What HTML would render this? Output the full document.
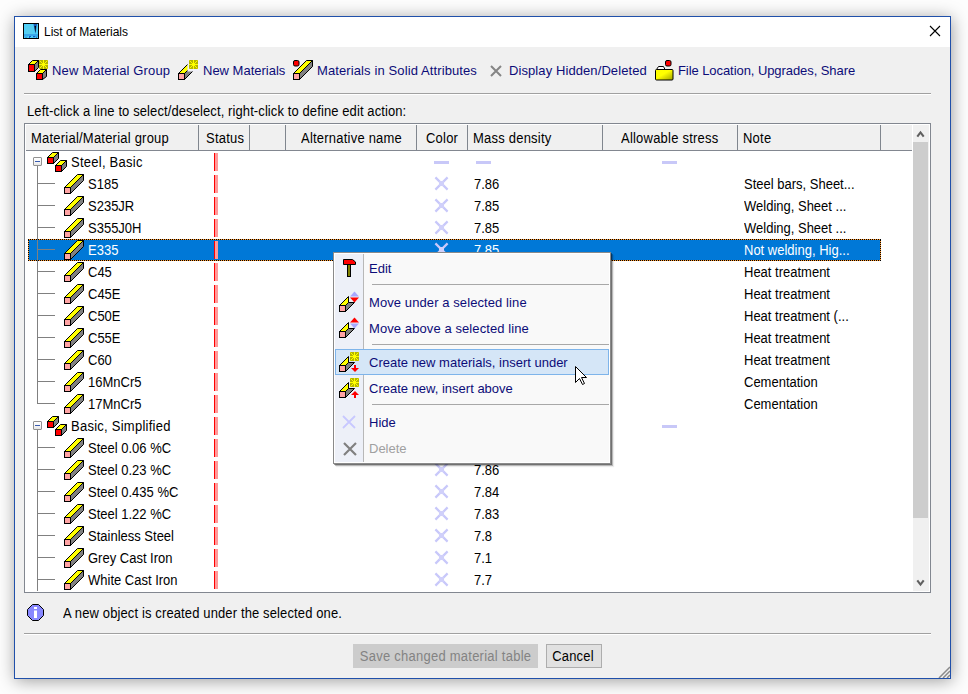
<!DOCTYPE html>
<html><head><meta charset="utf-8">
<style>
*{margin:0;padding:0;box-sizing:border-box}
html,body{width:968px;height:694px;overflow:hidden;background:#fdfdfd;font-family:"Liberation Sans",sans-serif;font-size:13px}
.abs{position:absolute}
#win{position:absolute;left:14px;top:16px;width:937px;height:663px;border:1px solid #2050aa;background:#f0f0f0;box-shadow:1px 2px 16px rgba(0,0,0,0.38)}
#title{position:absolute;left:0;top:0;width:935px;height:30px;background:#fff}
.ic{position:absolute;display:block}
.tb{position:absolute;top:60px;height:22px;line-height:22px;color:#0c0c78;white-space:nowrap}
#table{position:absolute;left:24px;top:123px;width:907px;height:470px;border:1px solid #828790;background:#fff;overflow:hidden}
.t{position:absolute;height:22px;line-height:22px;white-space:nowrap;color:#000;transform:scaleY(1.11);transform-origin:0 7px}
.sel{position:absolute;left:28px;width:853px;height:22px;background:#0078d7;border:1px solid #ff9a30}
.sel:after{content:'';position:absolute;left:-1px;top:-1px;right:-1px;bottom:-1px;border:1px dotted #000}
.exp{position:absolute;left:33px;width:9px;height:9px;border:1px solid #919191;border-radius:1px;background:linear-gradient(#fff,#f4f4f4 60%,#e6e6e6)}
.exp i{position:absolute;left:1px;top:3px;width:5px;height:1px;background:#3a5cb0}
.hb{position:absolute;left:37px;width:18px;height:1px;background:#808080}
.vl{position:absolute;left:37px;width:1px;background:#808080}
.st{position:absolute;left:214px;width:4px;height:18px;background:#ff9a9a;border-left:1px solid #f00}
.dash{position:absolute;width:15px;height:3px;background:#c8c8f8}
.xm{position:absolute;width:15px;height:15px}
.xm svg{display:block}
.hd{position:absolute;top:124px;height:27px;background:#f0f0f0;border-bottom:1px solid #828790}
.hdiv{position:absolute;top:125px;width:1px;height:25px;background:#80868e}
.ht{position:absolute;top:125px;height:26px;line-height:26px;white-space:nowrap;color:#000;transform:scaleY(1.11);transform-origin:0 9px;letter-spacing:0.22px}
#menu{position:absolute;left:333px;top:252px;width:278px;height:212px;background:#f9f9f9;border:1px solid #8a8a8a;box-shadow:inset 1px 1px 0 #fff,inset -1px -1px 0 #fff,1px 1px 0 rgba(0,0,0,0.38),2px 2px 0 rgba(0,0,0,0.22),3px 3px 1px rgba(0,0,0,0.08)}
.mi{position:absolute;left:369px;margin-top:1px;height:26px;line-height:26px;color:#0c0c78;white-space:nowrap}
.msep{position:absolute;left:372px;width:237px;height:1px;background:#a8a8a8}
.btn{position:absolute;top:644px;height:24px;line-height:22px;text-align:center;white-space:nowrap}
.btn span{display:inline-block;transform:scaleY(1.11);transform-origin:0 7px}
</style></head><body>
<div id="win">
 <div id="title"></div>
</div>
<!-- title -->
<svg class="ic" style="left:23px;top:23px" width="16" height="16" viewBox="0 0 16 16"><rect x="0.5" y="0.5" width="15" height="15" fill="#50d0f8" stroke="#000"/><rect x="3" y="3" width="7" height="9" fill="#58cef0"/><path d="M10.5,1 L14,1 L12.5,11 Z" fill="#1a5ab8"/><path d="M11.5,3 L13,3 L12.3,10 Z" fill="#000"/><rect x="1" y="11.5" width="14" height="1" fill="#2080e0"/><path d="M2,13.5 L3,14.5 L4,13.5 M6,13.5 h2 M6,14.5 h1 M10,13.5 h2 L11,14.5 M13,13.5 L13.5,14.5 L14,13.5" stroke="#1060c8" stroke-width="1" fill="none"/></svg>
<div class="t" style="left:44px;top:21px;height:22px;line-height:22px;font-size:12px;transform:none">List of Materials</div>
<svg class="ic" style="left:929px;top:25px" width="12" height="12" viewBox="0 0 12 12"><path d="M1,1 L11,11 M11,1 L1,11" stroke="#000" stroke-width="1.1"/></svg>

<!-- toolbar -->
<svg class="ic" style="left:28px;top:60px" width="22" height="21" viewBox="0 0 22 21"><polygon points="0.5,4.5 4.5,0.5 10.5,0.5 6.5,4.5" fill="#ff0" stroke="#000"/><polygon points="6.5,4.5 10.5,0.5 10.5,7.5 6.5,11.5" fill="#808080" stroke="#000"/><rect x="0.5" y="4.5" width="6" height="7" fill="#f00" stroke="#000"/><polygon points="8.5,13.5 12.5,9.5 18.5,9.5 14.5,13.5" fill="#ff0" stroke="#000"/><polygon points="14.5,13.5 18.5,9.5 18.5,16.5 14.5,19.5" fill="#808080" stroke="#000"/><rect x="8.5" y="13.5" width="6" height="6" fill="#f00" stroke="#000"/><rect x="11" y="0" width="9" height="9" fill="#b4b400"/><path d="M11.5,0.5 L19.5,8.5 M19.5,0.5 L11.5,8.5" stroke="#ffff00" stroke-width="1"/><path d="M15.5,0 v9 M11,4.5 h9" stroke="#ffff00" stroke-width="1"/><rect x="14" y="3" width="3" height="3" fill="#ffff00"/></svg>
<svg class="ic" style="left:178px;top:60px" width="22" height="21" viewBox="0 0 22 21"><polygon points="0.5,13.5 13.5,0.5 19.5,0.5 6.5,13.5" fill="#ffff00" stroke="#000"/><polygon points="6.5,13.5 19.5,0.5 19.5,6.5 6.5,19.5" fill="#808080" stroke="#000"/><rect x="0.5" y="13.5" width="6" height="6" fill="#ffa4a4" stroke="#000"/><rect x="9.5" y="-0.5" width="12" height="12" fill="#f0f0f8"/><rect x="11" y="0" width="9" height="9" fill="#b4b400"/><path d="M11.5,0.5 L19.5,8.5 M19.5,0.5 L11.5,8.5" stroke="#ffff00" stroke-width="1"/><path d="M15.5,0 v9 M11,4.5 h9" stroke="#ffff00" stroke-width="1"/><rect x="14" y="3" width="3" height="3" fill="#ffff00"/></svg>
<svg class="ic" style="left:293px;top:60px" width="21" height="21" viewBox="0 0 21 21"><polygon points="0.5,13.5 13.5,0.5 19.5,0.5 6.5,13.5" fill="#ffff00" stroke="#000"/><polygon points="6.5,13.5 19.5,0.5 19.5,6.5 6.5,19.5" fill="#808080" stroke="#000"/><rect x="0.5" y="13.5" width="6" height="6" fill="#ffa4a4" stroke="#000"/><rect x="0.5" y="0.5" width="5.5" height="5.5" rx="1.5" fill="#f00" stroke="#000"/></svg>
<svg class="ic" style="left:490px;top:65px" width="12" height="12" viewBox="0 0 12 12"><path d="M1,1 L11,11 M11,1 L1,11" stroke="#858585" stroke-width="2"/></svg>
<svg class="ic" style="left:655px;top:60px" width="20" height="21" viewBox="0 0 20 21"><path d="M1.5,9.5 L3.5,6.5 L8.5,6.5 L10,9.5" fill="#fff" stroke="#000"/><defs><linearGradient id="fg" x1="0" y1="0" x2="1" y2="1"><stop offset="0.45" stop-color="#ffff00"/><stop offset="1" stop-color="#a0a000"/></linearGradient></defs><rect x="0.5" y="9.5" width="17.5" height="10.5" rx="1" fill="url(#fg)" stroke="#000"/><rect x="10.5" y="0.5" width="5.5" height="5.5" rx="1.5" fill="#f00" stroke="#000"/></svg>
<div class="tb" style="left:52px;letter-spacing:0.14px">New Material Group</div>
<div class="tb" style="left:203px">New Materials</div>
<div class="tb" style="left:317px;letter-spacing:0.11px">Materials in Solid Attributes</div>
<div class="tb" style="left:509px;letter-spacing:0.09px">Display Hidden/Deleted</div>
<div class="tb" style="left:678px;letter-spacing:-0.07px">File Location, Upgrades, Share</div>
<div class="abs" style="left:24px;top:93px;width:907px;height:1px;background:#a0a0a0;box-shadow:0 1px 0 #fff"></div>
<div class="t" style="left:27px;top:100px;letter-spacing:0.1px">Left-click a line to select/deselect, right-click to define edit action:</div>

<div id="table"></div>
<div class="hd" style="left:26px;width:886px;top:125px;height:26px"></div>
<div class="hdiv" style="left:198px"></div>
<div class="hdiv" style="left:249px"></div>
<div class="hdiv" style="left:285px"></div>
<div class="hdiv" style="left:416px"></div>
<div class="hdiv" style="left:467px"></div>
<div class="hdiv" style="left:602px"></div>
<div class="hdiv" style="left:737px"></div>
<div class="hdiv" style="left:880px"></div>
<div class="ht" style="left:31px">Material/Material group</div>
<div class="ht" style="left:206px">Status</div>
<div class="ht" style="left:301px">Alternative name</div>
<div class="ht" style="left:426px">Color</div>
<div class="ht" style="left:473px">Mass density</div>
<div class="ht" style="left:621px">Allowable stress</div>
<div class="ht" style="left:743px">Note</div>
<!-- scrollbar -->
<div class="abs" style="left:913px;top:125px;width:16px;height:466px;background:#f0f0f0"></div>
<div class="abs" style="left:913px;top:142px;width:15px;height:376px;background:#cdcdcd"></div>
<svg class="ic" style="left:913px;top:125px" width="16" height="17" viewBox="0 0 16 17"><path d="M4.3,11.6 L7.5,7.4 L10.7,11.6" fill="none" stroke="#606060" stroke-width="2.1"/></svg>
<svg class="ic" style="left:913px;top:574px" width="16" height="17" viewBox="0 0 16 17"><path d="M4.3,6.4 L7.5,10.6 L10.7,6.4" fill="none" stroke="#606060" stroke-width="2.1"/></svg>

<div class="exp" style="top:157px"><i></i></div>
<svg class="ic" style="left:47px;top:152px" width="20" height="20" viewBox="0 0 20 20"><polygon points="0.5,5.5 5.5,0.5 11.5,0.5 6.5,5.5" fill="#ffff00" stroke="#000"/><polygon points="6.5,5.5 11.5,0.5 11.5,6.5 6.5,11.5" fill="#808080" stroke="#000"/><rect x="0.5" y="5.5" width="6" height="6" fill="#ff0000" stroke="#000"/><polygon points="8.5,13.5 13.5,8.5 19.5,8.5 14.5,13.5" fill="#ffff00" stroke="#000"/><polygon points="14.5,13.5 19.5,8.5 19.5,14.5 14.5,19.5" fill="#808080" stroke="#000"/><rect x="8.5" y="13.5" width="6" height="6" fill="#ff0000" stroke="#000"/></svg>
<div class="t" style="left:71px;top:151px;color:#000;letter-spacing:0.25px">Steel, Basic</div>
<div class="dash" style="left:662px;top:161px"></div>
<div class="dash" style="left:434px;top:161px"></div>
<div class="dash" style="left:476px;top:161px"></div>
<div class="st" style="top:153px"></div>
<div class="hb" style="top:183px"></div>
<svg class="ic" style="left:64px;top:174px" width="20" height="20" viewBox="0 0 20 20"><polygon points="0.5,13.5 13.5,0.5 19.5,0.5 6.5,13.5" fill="#ffff00" stroke="#000"/><polygon points="6.5,13.5 19.5,0.5 19.5,6.5 6.5,19.5" fill="#808080" stroke="#000"/><rect x="0.5" y="13.5" width="6" height="6" fill="#ffa4a4" stroke="#000"/></svg>
<div class="t" style="left:88px;top:173px;color:#000">S185</div>
<div class="xm" style="left:434px;top:176px"><svg width="15" height="15" viewBox="0 0 15 15"><path d="M1.4,1.4 L13.6,13.6 M13.6,1.4 L1.4,13.6" stroke="#c8c8fa" stroke-width="2.2"/><rect x="5" y="5" width="5" height="5" fill="#d0d0fa"/></svg></div>
<div class="t" style="left:474px;top:173px;color:#000">7.86</div>
<div class="t" style="left:744px;top:173px;color:#000">Steel bars, Sheet...</div>
<div class="st" style="top:175px"></div>
<div class="hb" style="top:205px"></div>
<svg class="ic" style="left:64px;top:196px" width="20" height="20" viewBox="0 0 20 20"><polygon points="0.5,13.5 13.5,0.5 19.5,0.5 6.5,13.5" fill="#ffff00" stroke="#000"/><polygon points="6.5,13.5 19.5,0.5 19.5,6.5 6.5,19.5" fill="#808080" stroke="#000"/><rect x="0.5" y="13.5" width="6" height="6" fill="#ffa4a4" stroke="#000"/></svg>
<div class="t" style="left:88px;top:195px;color:#000">S235JR</div>
<div class="xm" style="left:434px;top:198px"><svg width="15" height="15" viewBox="0 0 15 15"><path d="M1.4,1.4 L13.6,13.6 M13.6,1.4 L1.4,13.6" stroke="#c8c8fa" stroke-width="2.2"/><rect x="5" y="5" width="5" height="5" fill="#d0d0fa"/></svg></div>
<div class="t" style="left:474px;top:195px;color:#000">7.85</div>
<div class="t" style="left:744px;top:195px;color:#000">Welding, Sheet ...</div>
<div class="st" style="top:197px"></div>
<div class="hb" style="top:227px"></div>
<svg class="ic" style="left:64px;top:218px" width="20" height="20" viewBox="0 0 20 20"><polygon points="0.5,13.5 13.5,0.5 19.5,0.5 6.5,13.5" fill="#ffff00" stroke="#000"/><polygon points="6.5,13.5 19.5,0.5 19.5,6.5 6.5,19.5" fill="#808080" stroke="#000"/><rect x="0.5" y="13.5" width="6" height="6" fill="#ffa4a4" stroke="#000"/></svg>
<div class="t" style="left:88px;top:217px;color:#000">S355J0H</div>
<div class="xm" style="left:434px;top:220px"><svg width="15" height="15" viewBox="0 0 15 15"><path d="M1.4,1.4 L13.6,13.6 M13.6,1.4 L1.4,13.6" stroke="#c8c8fa" stroke-width="2.2"/><rect x="5" y="5" width="5" height="5" fill="#d0d0fa"/></svg></div>
<div class="t" style="left:474px;top:217px;color:#000">7.85</div>
<div class="t" style="left:744px;top:217px;color:#000">Welding, Sheet ...</div>
<div class="st" style="top:219px"></div>
<div class="sel" style="top:239px"></div>
<div class="hb" style="top:249px"></div>
<svg class="ic" style="left:64px;top:240px" width="20" height="20" viewBox="0 0 20 20"><polygon points="0.5,13.5 13.5,0.5 19.5,0.5 6.5,13.5" fill="#ffff00" stroke="#000"/><polygon points="6.5,13.5 19.5,0.5 19.5,6.5 6.5,19.5" fill="#808080" stroke="#000"/><rect x="0.5" y="13.5" width="6" height="6" fill="#ffa4a4" stroke="#000"/></svg>
<div class="t" style="left:88px;top:239px;color:#fff">E335</div>
<div class="xm" style="left:434px;top:242px"><svg width="15" height="15" viewBox="0 0 15 15"><path d="M1.4,1.4 L13.6,13.6 M13.6,1.4 L1.4,13.6" stroke="#c8c8fa" stroke-width="2.2"/><rect x="5" y="5" width="5" height="5" fill="#d0d0fa"/></svg></div>
<div class="t" style="left:474px;top:239px;color:#fff">7.85</div>
<div class="t" style="left:744px;top:239px;color:#fff">Not welding, Hig...</div>
<div class="st" style="top:241px"></div>
<div class="hb" style="top:271px"></div>
<svg class="ic" style="left:64px;top:262px" width="20" height="20" viewBox="0 0 20 20"><polygon points="0.5,13.5 13.5,0.5 19.5,0.5 6.5,13.5" fill="#ffff00" stroke="#000"/><polygon points="6.5,13.5 19.5,0.5 19.5,6.5 6.5,19.5" fill="#808080" stroke="#000"/><rect x="0.5" y="13.5" width="6" height="6" fill="#ffa4a4" stroke="#000"/></svg>
<div class="t" style="left:88px;top:261px;color:#000">C45</div>
<div class="xm" style="left:434px;top:264px"><svg width="15" height="15" viewBox="0 0 15 15"><path d="M1.4,1.4 L13.6,13.6 M13.6,1.4 L1.4,13.6" stroke="#c8c8fa" stroke-width="2.2"/><rect x="5" y="5" width="5" height="5" fill="#d0d0fa"/></svg></div>
<div class="t" style="left:474px;top:261px;color:#000">7.85</div>
<div class="t" style="left:744px;top:261px;color:#000">Heat treatment</div>
<div class="st" style="top:263px"></div>
<div class="hb" style="top:293px"></div>
<svg class="ic" style="left:64px;top:284px" width="20" height="20" viewBox="0 0 20 20"><polygon points="0.5,13.5 13.5,0.5 19.5,0.5 6.5,13.5" fill="#ffff00" stroke="#000"/><polygon points="6.5,13.5 19.5,0.5 19.5,6.5 6.5,19.5" fill="#808080" stroke="#000"/><rect x="0.5" y="13.5" width="6" height="6" fill="#ffa4a4" stroke="#000"/></svg>
<div class="t" style="left:88px;top:283px;color:#000">C45E</div>
<div class="xm" style="left:434px;top:286px"><svg width="15" height="15" viewBox="0 0 15 15"><path d="M1.4,1.4 L13.6,13.6 M13.6,1.4 L1.4,13.6" stroke="#c8c8fa" stroke-width="2.2"/><rect x="5" y="5" width="5" height="5" fill="#d0d0fa"/></svg></div>
<div class="t" style="left:474px;top:283px;color:#000">7.85</div>
<div class="t" style="left:744px;top:283px;color:#000">Heat treatment</div>
<div class="st" style="top:285px"></div>
<div class="hb" style="top:315px"></div>
<svg class="ic" style="left:64px;top:306px" width="20" height="20" viewBox="0 0 20 20"><polygon points="0.5,13.5 13.5,0.5 19.5,0.5 6.5,13.5" fill="#ffff00" stroke="#000"/><polygon points="6.5,13.5 19.5,0.5 19.5,6.5 6.5,19.5" fill="#808080" stroke="#000"/><rect x="0.5" y="13.5" width="6" height="6" fill="#ffa4a4" stroke="#000"/></svg>
<div class="t" style="left:88px;top:305px;color:#000">C50E</div>
<div class="xm" style="left:434px;top:308px"><svg width="15" height="15" viewBox="0 0 15 15"><path d="M1.4,1.4 L13.6,13.6 M13.6,1.4 L1.4,13.6" stroke="#c8c8fa" stroke-width="2.2"/><rect x="5" y="5" width="5" height="5" fill="#d0d0fa"/></svg></div>
<div class="t" style="left:474px;top:305px;color:#000">7.85</div>
<div class="t" style="left:744px;top:305px;color:#000">Heat treatment (...</div>
<div class="st" style="top:307px"></div>
<div class="hb" style="top:337px"></div>
<svg class="ic" style="left:64px;top:328px" width="20" height="20" viewBox="0 0 20 20"><polygon points="0.5,13.5 13.5,0.5 19.5,0.5 6.5,13.5" fill="#ffff00" stroke="#000"/><polygon points="6.5,13.5 19.5,0.5 19.5,6.5 6.5,19.5" fill="#808080" stroke="#000"/><rect x="0.5" y="13.5" width="6" height="6" fill="#ffa4a4" stroke="#000"/></svg>
<div class="t" style="left:88px;top:327px;color:#000">C55E</div>
<div class="xm" style="left:434px;top:330px"><svg width="15" height="15" viewBox="0 0 15 15"><path d="M1.4,1.4 L13.6,13.6 M13.6,1.4 L1.4,13.6" stroke="#c8c8fa" stroke-width="2.2"/><rect x="5" y="5" width="5" height="5" fill="#d0d0fa"/></svg></div>
<div class="t" style="left:474px;top:327px;color:#000">7.85</div>
<div class="t" style="left:744px;top:327px;color:#000">Heat treatment</div>
<div class="st" style="top:329px"></div>
<div class="hb" style="top:359px"></div>
<svg class="ic" style="left:64px;top:350px" width="20" height="20" viewBox="0 0 20 20"><polygon points="0.5,13.5 13.5,0.5 19.5,0.5 6.5,13.5" fill="#ffff00" stroke="#000"/><polygon points="6.5,13.5 19.5,0.5 19.5,6.5 6.5,19.5" fill="#808080" stroke="#000"/><rect x="0.5" y="13.5" width="6" height="6" fill="#ffa4a4" stroke="#000"/></svg>
<div class="t" style="left:88px;top:349px;color:#000">C60</div>
<div class="xm" style="left:434px;top:352px"><svg width="15" height="15" viewBox="0 0 15 15"><path d="M1.4,1.4 L13.6,13.6 M13.6,1.4 L1.4,13.6" stroke="#c8c8fa" stroke-width="2.2"/><rect x="5" y="5" width="5" height="5" fill="#d0d0fa"/></svg></div>
<div class="t" style="left:474px;top:349px;color:#000">7.85</div>
<div class="t" style="left:744px;top:349px;color:#000">Heat treatment</div>
<div class="st" style="top:351px"></div>
<div class="hb" style="top:381px"></div>
<svg class="ic" style="left:64px;top:372px" width="20" height="20" viewBox="0 0 20 20"><polygon points="0.5,13.5 13.5,0.5 19.5,0.5 6.5,13.5" fill="#ffff00" stroke="#000"/><polygon points="6.5,13.5 19.5,0.5 19.5,6.5 6.5,19.5" fill="#808080" stroke="#000"/><rect x="0.5" y="13.5" width="6" height="6" fill="#ffa4a4" stroke="#000"/></svg>
<div class="t" style="left:88px;top:371px;color:#000">16MnCr5</div>
<div class="xm" style="left:434px;top:374px"><svg width="15" height="15" viewBox="0 0 15 15"><path d="M1.4,1.4 L13.6,13.6 M13.6,1.4 L1.4,13.6" stroke="#c8c8fa" stroke-width="2.2"/><rect x="5" y="5" width="5" height="5" fill="#d0d0fa"/></svg></div>
<div class="t" style="left:474px;top:371px;color:#000">7.85</div>
<div class="t" style="left:744px;top:371px;color:#000">Cementation</div>
<div class="st" style="top:373px"></div>
<div class="hb" style="top:403px"></div>
<svg class="ic" style="left:64px;top:394px" width="20" height="20" viewBox="0 0 20 20"><polygon points="0.5,13.5 13.5,0.5 19.5,0.5 6.5,13.5" fill="#ffff00" stroke="#000"/><polygon points="6.5,13.5 19.5,0.5 19.5,6.5 6.5,19.5" fill="#808080" stroke="#000"/><rect x="0.5" y="13.5" width="6" height="6" fill="#ffa4a4" stroke="#000"/></svg>
<div class="t" style="left:88px;top:393px;color:#000">17MnCr5</div>
<div class="xm" style="left:434px;top:396px"><svg width="15" height="15" viewBox="0 0 15 15"><path d="M1.4,1.4 L13.6,13.6 M13.6,1.4 L1.4,13.6" stroke="#c8c8fa" stroke-width="2.2"/><rect x="5" y="5" width="5" height="5" fill="#d0d0fa"/></svg></div>
<div class="t" style="left:474px;top:393px;color:#000">7.85</div>
<div class="t" style="left:744px;top:393px;color:#000">Cementation</div>
<div class="st" style="top:395px"></div>
<div class="exp" style="top:421px"><i></i></div>
<svg class="ic" style="left:47px;top:416px" width="20" height="20" viewBox="0 0 20 20"><polygon points="0.5,5.5 5.5,0.5 11.5,0.5 6.5,5.5" fill="#ffff00" stroke="#000"/><polygon points="6.5,5.5 11.5,0.5 11.5,6.5 6.5,11.5" fill="#808080" stroke="#000"/><rect x="0.5" y="5.5" width="6" height="6" fill="#ff0000" stroke="#000"/><polygon points="8.5,13.5 13.5,8.5 19.5,8.5 14.5,13.5" fill="#ffff00" stroke="#000"/><polygon points="14.5,13.5 19.5,8.5 19.5,14.5 14.5,19.5" fill="#808080" stroke="#000"/><rect x="8.5" y="13.5" width="6" height="6" fill="#ff0000" stroke="#000"/></svg>
<div class="t" style="left:71px;top:415px;color:#000;letter-spacing:0.25px">Basic, Simplified</div>
<div class="dash" style="left:662px;top:425px"></div>
<div class="st" style="top:417px"></div>
<div class="hb" style="top:447px"></div>
<svg class="ic" style="left:64px;top:438px" width="20" height="20" viewBox="0 0 20 20"><polygon points="0.5,13.5 13.5,0.5 19.5,0.5 6.5,13.5" fill="#ffff00" stroke="#000"/><polygon points="6.5,13.5 19.5,0.5 19.5,6.5 6.5,19.5" fill="#808080" stroke="#000"/><rect x="0.5" y="13.5" width="6" height="6" fill="#ffa4a4" stroke="#000"/></svg>
<div class="t" style="left:88px;top:437px;color:#000">Steel 0.06 %C</div>
<div class="xm" style="left:434px;top:440px"><svg width="15" height="15" viewBox="0 0 15 15"><path d="M1.4,1.4 L13.6,13.6 M13.6,1.4 L1.4,13.6" stroke="#c8c8fa" stroke-width="2.2"/><rect x="5" y="5" width="5" height="5" fill="#d0d0fa"/></svg></div>
<div class="t" style="left:474px;top:437px;color:#000">7.86</div>
<div class="st" style="top:439px"></div>
<div class="hb" style="top:469px"></div>
<svg class="ic" style="left:64px;top:460px" width="20" height="20" viewBox="0 0 20 20"><polygon points="0.5,13.5 13.5,0.5 19.5,0.5 6.5,13.5" fill="#ffff00" stroke="#000"/><polygon points="6.5,13.5 19.5,0.5 19.5,6.5 6.5,19.5" fill="#808080" stroke="#000"/><rect x="0.5" y="13.5" width="6" height="6" fill="#ffa4a4" stroke="#000"/></svg>
<div class="t" style="left:88px;top:459px;color:#000">Steel 0.23 %C</div>
<div class="xm" style="left:434px;top:462px"><svg width="15" height="15" viewBox="0 0 15 15"><path d="M1.4,1.4 L13.6,13.6 M13.6,1.4 L1.4,13.6" stroke="#c8c8fa" stroke-width="2.2"/><rect x="5" y="5" width="5" height="5" fill="#d0d0fa"/></svg></div>
<div class="t" style="left:474px;top:459px;color:#000">7.86</div>
<div class="st" style="top:461px"></div>
<div class="hb" style="top:491px"></div>
<svg class="ic" style="left:64px;top:482px" width="20" height="20" viewBox="0 0 20 20"><polygon points="0.5,13.5 13.5,0.5 19.5,0.5 6.5,13.5" fill="#ffff00" stroke="#000"/><polygon points="6.5,13.5 19.5,0.5 19.5,6.5 6.5,19.5" fill="#808080" stroke="#000"/><rect x="0.5" y="13.5" width="6" height="6" fill="#ffa4a4" stroke="#000"/></svg>
<div class="t" style="left:88px;top:481px;color:#000">Steel 0.435 %C</div>
<div class="xm" style="left:434px;top:484px"><svg width="15" height="15" viewBox="0 0 15 15"><path d="M1.4,1.4 L13.6,13.6 M13.6,1.4 L1.4,13.6" stroke="#c8c8fa" stroke-width="2.2"/><rect x="5" y="5" width="5" height="5" fill="#d0d0fa"/></svg></div>
<div class="t" style="left:474px;top:481px;color:#000">7.84</div>
<div class="st" style="top:483px"></div>
<div class="hb" style="top:513px"></div>
<svg class="ic" style="left:64px;top:504px" width="20" height="20" viewBox="0 0 20 20"><polygon points="0.5,13.5 13.5,0.5 19.5,0.5 6.5,13.5" fill="#ffff00" stroke="#000"/><polygon points="6.5,13.5 19.5,0.5 19.5,6.5 6.5,19.5" fill="#808080" stroke="#000"/><rect x="0.5" y="13.5" width="6" height="6" fill="#ffa4a4" stroke="#000"/></svg>
<div class="t" style="left:88px;top:503px;color:#000">Steel 1.22 %C</div>
<div class="xm" style="left:434px;top:506px"><svg width="15" height="15" viewBox="0 0 15 15"><path d="M1.4,1.4 L13.6,13.6 M13.6,1.4 L1.4,13.6" stroke="#c8c8fa" stroke-width="2.2"/><rect x="5" y="5" width="5" height="5" fill="#d0d0fa"/></svg></div>
<div class="t" style="left:474px;top:503px;color:#000">7.83</div>
<div class="st" style="top:505px"></div>
<div class="hb" style="top:535px"></div>
<svg class="ic" style="left:64px;top:526px" width="20" height="20" viewBox="0 0 20 20"><polygon points="0.5,13.5 13.5,0.5 19.5,0.5 6.5,13.5" fill="#ffff00" stroke="#000"/><polygon points="6.5,13.5 19.5,0.5 19.5,6.5 6.5,19.5" fill="#808080" stroke="#000"/><rect x="0.5" y="13.5" width="6" height="6" fill="#ffa4a4" stroke="#000"/></svg>
<div class="t" style="left:88px;top:525px;color:#000">Stainless Steel</div>
<div class="xm" style="left:434px;top:528px"><svg width="15" height="15" viewBox="0 0 15 15"><path d="M1.4,1.4 L13.6,13.6 M13.6,1.4 L1.4,13.6" stroke="#c8c8fa" stroke-width="2.2"/><rect x="5" y="5" width="5" height="5" fill="#d0d0fa"/></svg></div>
<div class="t" style="left:474px;top:525px;color:#000">7.8</div>
<div class="st" style="top:527px"></div>
<div class="hb" style="top:557px"></div>
<svg class="ic" style="left:64px;top:548px" width="20" height="20" viewBox="0 0 20 20"><polygon points="0.5,13.5 13.5,0.5 19.5,0.5 6.5,13.5" fill="#ffff00" stroke="#000"/><polygon points="6.5,13.5 19.5,0.5 19.5,6.5 6.5,19.5" fill="#808080" stroke="#000"/><rect x="0.5" y="13.5" width="6" height="6" fill="#ffa4a4" stroke="#000"/></svg>
<div class="t" style="left:88px;top:547px;color:#000">Grey Cast Iron</div>
<div class="xm" style="left:434px;top:550px"><svg width="15" height="15" viewBox="0 0 15 15"><path d="M1.4,1.4 L13.6,13.6 M13.6,1.4 L1.4,13.6" stroke="#c8c8fa" stroke-width="2.2"/><rect x="5" y="5" width="5" height="5" fill="#d0d0fa"/></svg></div>
<div class="t" style="left:474px;top:547px;color:#000">7.1</div>
<div class="st" style="top:549px"></div>
<div class="hb" style="top:579px"></div>
<svg class="ic" style="left:64px;top:570px" width="20" height="20" viewBox="0 0 20 20"><polygon points="0.5,13.5 13.5,0.5 19.5,0.5 6.5,13.5" fill="#ffff00" stroke="#000"/><polygon points="6.5,13.5 19.5,0.5 19.5,6.5 6.5,19.5" fill="#808080" stroke="#000"/><rect x="0.5" y="13.5" width="6" height="6" fill="#ffa4a4" stroke="#000"/></svg>
<div class="t" style="left:88px;top:569px;color:#000">White Cast Iron</div>
<div class="xm" style="left:434px;top:572px"><svg width="15" height="15" viewBox="0 0 15 15"><path d="M1.4,1.4 L13.6,13.6 M13.6,1.4 L1.4,13.6" stroke="#c8c8fa" stroke-width="2.2"/><rect x="5" y="5" width="5" height="5" fill="#d0d0fa"/></svg></div>
<div class="t" style="left:474px;top:569px;color:#000">7.7</div>
<div class="st" style="top:571px"></div>
<div class="vl" style="top:166px;height:238px"></div>
<div class="vl" style="top:430px;height:161px"></div>

<!-- status -->
<svg class="ic" style="left:27px;top:604px" width="18" height="18" viewBox="0 0 18 18"><polygon points="5.5,0.5 11.5,0.5 16.5,5.5 16.5,11.5 11.5,16.5 5.5,16.5 0.5,11.5 0.5,5.5" fill="#8888ff" stroke="#000"/><rect x="7" y="3" width="3" height="2" fill="#fff"/><rect x="7" y="6.5" width="3" height="7.5" fill="#fff"/></svg>
<svg class="ic" style="left:938px;top:666px" width="12" height="12" viewBox="0 0 12 12"><path d="M12,1 L1,12 M12,5 L5,12 M12,9 L9,12" stroke="#8a8a8a" stroke-width="1.5"/></svg>
<div class="t" style="left:63px;top:602px;letter-spacing:0.125px">A new object is created under the selected one.</div>
<div class="abs" style="left:24px;top:633px;width:907px;height:1px;background:#a0a0a0;box-shadow:0 1px 0 #fff"></div>
<div class="btn" style="left:353px;width:185px;background:#cccccc;border:1px solid #cccccc;color:#838383;letter-spacing:0.25px"><span>Save changed material table</span></div>
<div class="btn" style="left:546px;width:56px;background:#e1e1e1;border:1px solid #adadad;color:#000;letter-spacing:0.2px;padding-right:2px"><span>Cancel</span></div>

<!-- context menu -->
<div id="menu"></div>
<div class="abs" style="left:335px;top:254px;width:28px;height:208px;background:#edf0f8"></div>
<div class="abs" style="left:363px;top:254px;width:1px;height:208px;background:#b8b8b8"></div>
<div class="abs" style="left:335px;top:349px;width:274px;height:26px;background:#d5e6f7;border:1px solid #7eb4ea"></div>
<div class="mi" style="top:255px">Edit</div>
<div class="msep" style="top:284px"></div>
<div class="mi" style="top:289px;letter-spacing:0.09px">Move under a selected line</div>
<div class="mi" style="top:315px;letter-spacing:0.09px">Move above a selected line</div>
<div class="msep" style="top:344px"></div>
<div class="mi" style="top:349px">Create new materials, insert under</div>
<div class="mi" style="top:375px">Create new, insert above</div>
<div class="msep" style="top:404px"></div>
<div class="mi" style="top:409px">Hide</div>
<div class="mi" style="top:435px;color:#a0a0a0">Delete</div>
<svg class="ic" style="left:342px;top:258px" width="15" height="20" viewBox="0 0 15 20"><path d="M1.5,1.5 H10.5 L13.5,4 V6.5 H1.5 Z" fill="#f00" stroke="#000"/><rect x="5.5" y="6.5" width="3" height="12" fill="#808000" stroke="#000"/></svg>
<svg class="ic" style="left:339px;top:291px" width="22" height="22" viewBox="0 0 22 22"><polygon points="0.5,14.5 9.5,5.5 9.5,11.5 6.5,14.5" fill="#ff0" stroke="#000"/><polygon points="6.5,14.5 9.5,11.5 15.5,11.5 6.5,20.5" fill="#808080" stroke="#000"/><rect x="0.5" y="14.5" width="6" height="6" fill="#ffa4a4" stroke="#000"/><polygon points="11,5.5 15.5,0.5 20,5.5" fill="#a8a8ff"/><polygon points="11,6.5 20,6.5 15.5,11.5" fill="#ff0000"/></svg>
<svg class="ic" style="left:339px;top:317px" width="22" height="22" viewBox="0 0 22 22"><polygon points="0.5,14.5 9.5,5.5 9.5,11.5 6.5,14.5" fill="#ff0" stroke="#000"/><polygon points="6.5,14.5 9.5,11.5 15.5,11.5 6.5,20.5" fill="#808080" stroke="#000"/><rect x="0.5" y="14.5" width="6" height="6" fill="#ffa4a4" stroke="#000"/><polygon points="11,5.5 15.5,0.5 20,5.5" fill="#ff0000"/><polygon points="11,6.5 20,6.5 15.5,11.5" fill="#a8a8ff"/></svg>
<svg class="ic" style="left:339px;top:351px" width="22" height="22" viewBox="0 0 22 22"><polygon points="0.5,14.5 9.5,5.5 9.5,11.5 6.5,14.5" fill="#ff0" stroke="#000"/><polygon points="6.5,14.5 9.5,11.5 15.5,11.5 6.5,20.5" fill="#808080" stroke="#000"/><rect x="0.5" y="14.5" width="6" height="6" fill="#ffa4a4" stroke="#000"/><rect x="11" y="1" width="9" height="9" fill="#b4b400"/><path d="M11.5,1.5 L19.5,9.5 M19.5,1.5 L11.5,9.5" stroke="#ffff00" stroke-width="1"/><path d="M15.5,1 v9 M11,5.5 h9" stroke="#ffff00" stroke-width="1"/><rect x="14" y="4" width="3" height="3" fill="#ffff00"/><path d="M16,14 V18" stroke="#f00" stroke-width="2"/><polygon points="12,17 20,17 16,21" fill="#f00"/></svg>
<svg class="ic" style="left:339px;top:377px" width="22" height="22" viewBox="0 0 22 22"><polygon points="0.5,14.5 9.5,5.5 9.5,11.5 6.5,14.5" fill="#ff0" stroke="#000"/><polygon points="6.5,14.5 9.5,11.5 15.5,11.5 6.5,20.5" fill="#808080" stroke="#000"/><rect x="0.5" y="14.5" width="6" height="6" fill="#ffa4a4" stroke="#000"/><rect x="11" y="1" width="9" height="9" fill="#b4b400"/><path d="M11.5,1.5 L19.5,9.5 M19.5,1.5 L11.5,9.5" stroke="#ffff00" stroke-width="1"/><path d="M15.5,1 v9 M11,5.5 h9" stroke="#ffff00" stroke-width="1"/><rect x="14" y="4" width="3" height="3" fill="#ffff00"/><path d="M16,17 V21" stroke="#f00" stroke-width="2"/><polygon points="12,18 20,18 16,14" fill="#f00"/></svg>
<svg class="ic" style="left:342px;top:415px" width="14" height="14" viewBox="0 0 14 14"><path d="M1,1 L13,13 M13,1 L1,13" stroke="#c8c8ff" stroke-width="1.8"/></svg>
<svg class="ic" style="left:343px;top:442px" width="14" height="14" viewBox="0 0 14 14"><path d="M1,1 L13,13 M13,1 L1,13" stroke="#808080" stroke-width="2.2"/></svg>
<svg class="ic" style="left:574px;top:365px" width="14" height="22" viewBox="0 0 14 22"><path d="M1.5,1.5 V17.5 L5.5,13.5 L8.5,19.5 L10.5,18.5 L7.5,12.5 H12.5 Z" fill="#fff" stroke="#000" stroke-linejoin="round"/></svg>
</body></html>
